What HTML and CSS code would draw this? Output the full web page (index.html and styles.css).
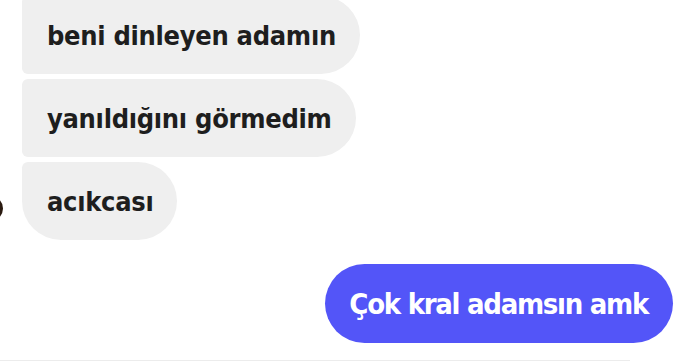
FILE: index.html
```html
<!DOCTYPE html>
<html lang="tr">
<head>
<meta charset="utf-8">
<link rel="stylesheet" href="styles.css">
</head>
<body>
<div class="chat">
  <div class="group in">
    <span class="avatar"></span>
    <div class="bubble">beni dinleyen adamın</div>
    <div class="bubble">yanıldığını görmedim</div>
    <div class="bubble last">acıkcası</div>
  </div>
  <div class="group out">
    <div class="bubble me">Çok kral adamsın amk</div>
  </div>
  <div class="composer-line"></div>
</div>
</body>
</html>
```
FILE: styles.css
```css
html, body {
  margin: 0;
  padding: 0;
  background: #ffffff;
  width: 690px;
  height: 361px;
  overflow: hidden;
}
.chat {
  display: flex;
  flex-direction: column;
  margin-top: -4px;
  font-family: "DejaVu Sans Condensed", "DejaVu Sans", sans-serif;
  font-weight: bold;
}
.group {
  display: flex;
  flex-direction: column;
  gap: 5px;
  position: relative;
}
.group.in {
  align-items: flex-start;
  padding-left: 22px;
}
.group.out {
  align-items: flex-end;
  padding-right: 17px;
  margin-top: 24px;
}
.avatar {
  position: absolute;
  left: -22px;
  top: 200px;
  width: 25px;
  height: 25px;
  border-radius: 50%;
  background: radial-gradient(circle at 85% 50%, #2a1a10 0 30%, #c4621e 50%, #f4e2cf 75%);
}
.bubble {
  height: 78px;
  display: flex;
  align-items: center;
  box-sizing: border-box;
  padding: 0 24px 0 25px;
  background: #efefef;
  color: #1e1e1e;
  font-size: 27px;
  letter-spacing: -0.3px;
  border-radius: 6px 40px 40px 6px;
}
.bubble.last {
  border-radius: 6px 40px 40px 40px;
}
.bubble.me {
  height: 79px;
  background: #5355f8;
  color: #ffffff;
  font-size: 29px;
  letter-spacing: -1.3px;
  padding: 0 25px 0 24px;
  border-radius: 40px;
}
.composer-line {
  margin-top: 17px;
  width: 630px;
  height: 2px;
  background: #ececec;
}
```
